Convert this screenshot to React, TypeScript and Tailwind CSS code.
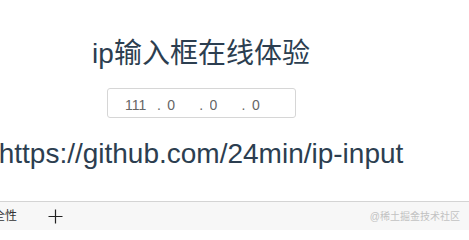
import React from 'react';

const SEGMENTS = ['111', '0', '0', '0'];

function IpInput() {
  return (
    <div className="flex h-[30px] w-[189px] items-center rounded-[3px] border border-[#d6d6d6] bg-white pl-[17.5px] pt-[3px]">
      {SEGMENTS.map((value, index) => (
        <div key={index} className="flex items-center">
          <input
            type="text"
            defaultValue={value}
            className="w-[30px] bg-transparent p-0 text-[14px] leading-[16px] text-[#666] outline-none"
          />
          {index < SEGMENTS.length - 1 && (
            <span className="w-[12.3px] pl-[2px] text-[14px] leading-[16px] text-[#666]">.</span>
          )}
        </div>
      ))}
    </div>
  );
}

export default function App() {
  return (
    <div
      className="flex h-[230px] w-[469px] flex-col overflow-hidden bg-white text-[#2c3e50]"
      style={{ fontFamily: '"Liberation Sans", Arial, "Noto Sans CJK SC", sans-serif' }}
    >
      {/* Demo page */}
      <div className="flex h-[201px] w-[402px] flex-col items-center">
        <h1 className="mt-[38px] whitespace-nowrap text-[28px] font-normal leading-[32px]">ip输入框在线体验</h1>
        <div className="mt-[18px]">
          <IpInput />
        </div>
        <p className="mt-[20px] whitespace-nowrap text-[28px] leading-[32px]">https://github.com/24min/ip-input</p>
      </div>

      {/* Browser tab strip */}
      <div className="flex h-[29px] items-center border-t border-[#d4d4d4] bg-[#f7f7f7]">
        <span className="ml-[-19px] whitespace-nowrap text-[12px] leading-[14px] text-[#333]">安全性</span>
        <svg className="ml-[31px] mt-[1px]" width="15" height="15" viewBox="0 0 15 15" fill="none" stroke="#222" strokeWidth="1.2">
          <path d="M7.5 0.5v14M0.5 7.5h14" />
        </svg>
        <span className="ml-auto mr-[9px] mt-[1px] whitespace-nowrap text-[10px] leading-[12px] text-[#c2c2c2]">@稀土掘金技术社区</span>
      </div>
    </div>
  );
}
